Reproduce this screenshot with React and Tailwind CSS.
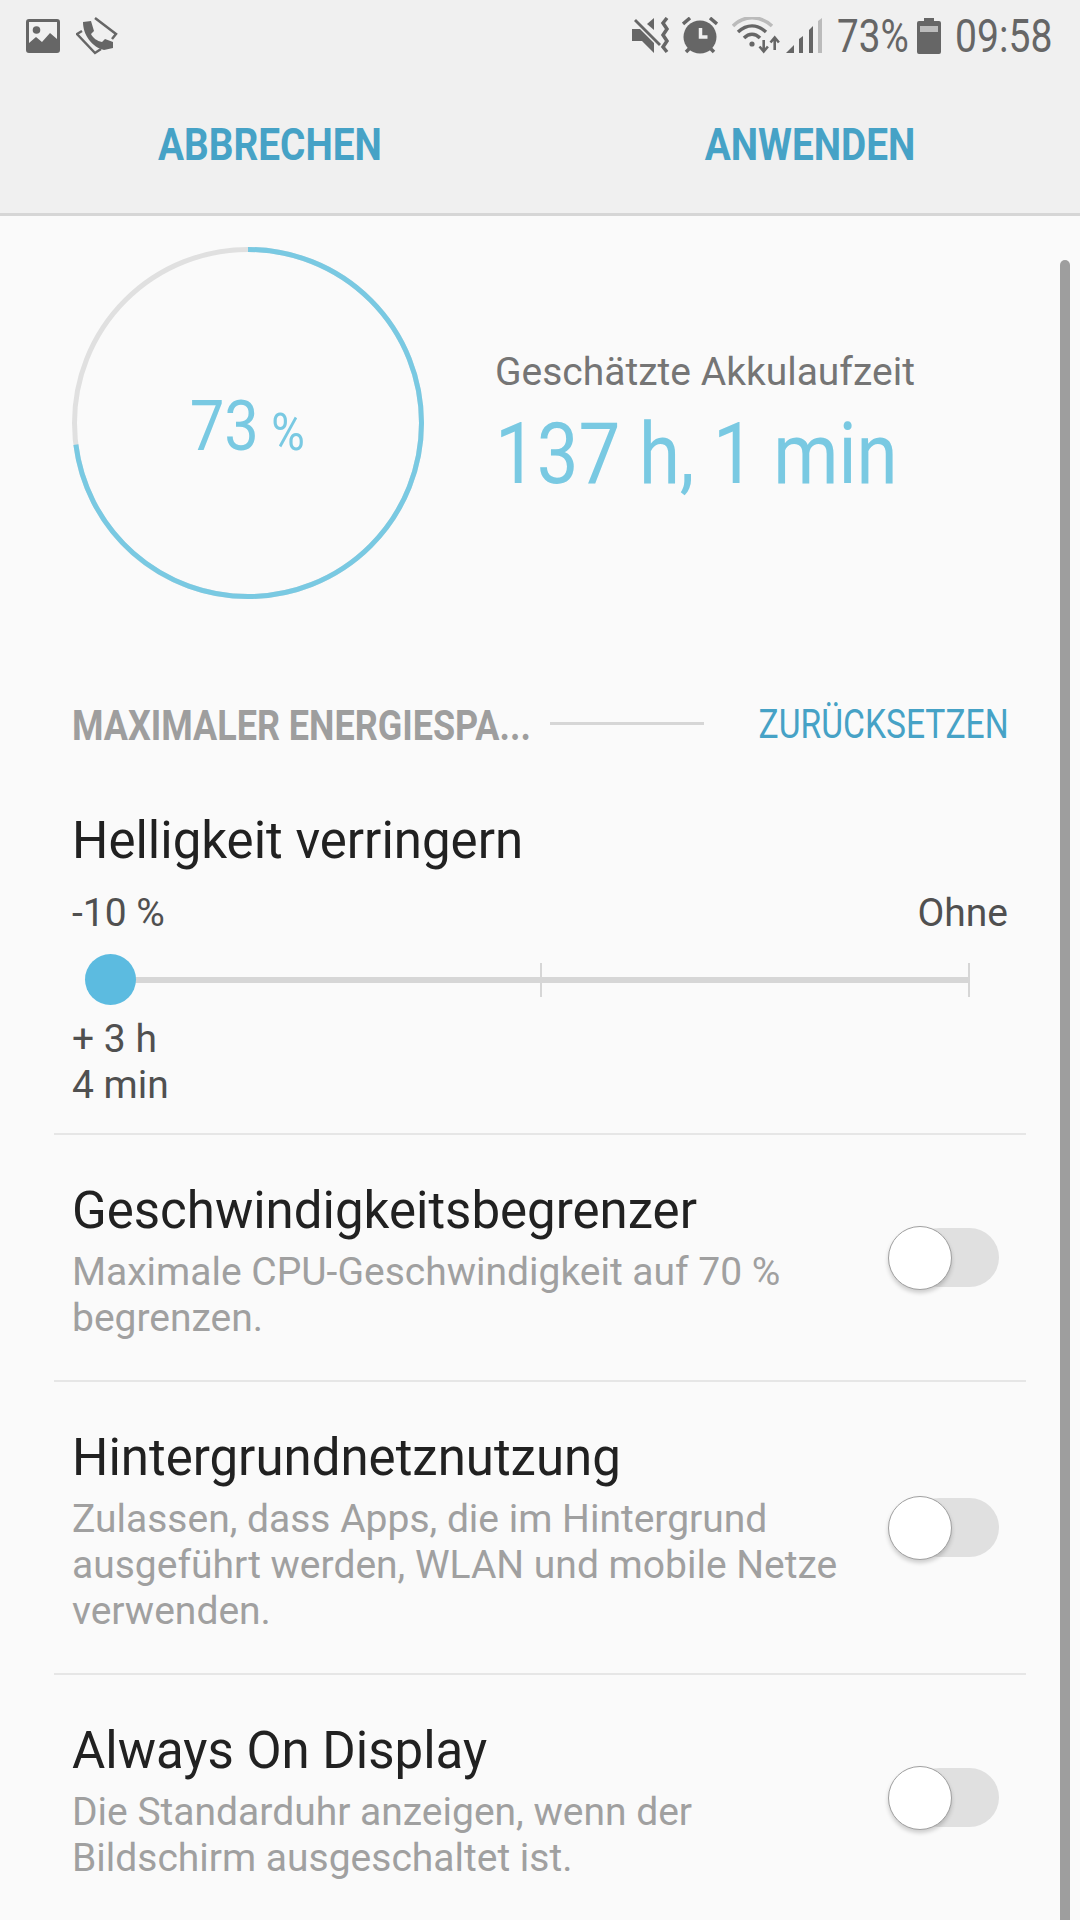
const font = { fontFamily: 'Roboto, sans-serif' };

const StatusIcons = () => (
  <div className="flex items-center">
    {/* mute */}
    <svg width="40" height="38" viewBox="0 0 40 38" fill="#666">
      <path d="M0 12h8l14 14v10L10 24H0z" />
      <path d="M15 7l7-6v12z" />
      <path d="M2 4l2-2 25 25-2 2z" />
      <path d="M35 1l-4 5 4 6-4 6 4 6-4 6 4 5" fill="none" stroke="#666" strokeWidth="3.5" />
    </svg>
    {/* alarm */}
    <svg width="36" height="38" viewBox="0 0 36 38" className="ml-[10px]">
      <circle cx="18" cy="20" r="16.5" fill="#666" />
      <path d="M1 7l7-6M35 7l-7-6M4 35l4-4M32 35l-4-4" stroke="#666" strokeWidth="3.5" fill="none" />
      <path d="M18.5 11v9h7" stroke="#f0f0f0" strokeWidth="3.5" fill="none" />
    </svg>
    {/* wifi */}
    <svg width="48" height="38" viewBox="0 0 48 38" fill="none" className="ml-[14px]">
      <path d="M1 9C12 -2 28 -2 40 9" stroke="#bbb" strokeWidth="3.5" />
      <path d="M6 15c9-8 19-8 28 0" stroke="#666" strokeWidth="3.5" />
      <path d="M12 21c5-5 11-5 16 0" stroke="#666" strokeWidth="3.5" />
      <circle cx="20" cy="27" r="2.6" fill="#666" />
      <path d="M31.7 23v10M27.5 29.5l4.2 5 4.2-5" stroke="#666" strokeWidth="2.6" />
      <path d="M42.7 33V21M38.5 25.5l4.2-5 4.2 5" stroke="#666" strokeWidth="2.6" />
    </svg>
    {/* signal */}
    <svg width="37" height="38" viewBox="0 0 37 38" className="ml-[6px]">
      <path d="M0 36l8-8v8z" fill="#666" />
      <path d="M13 22l4-3v17h-4z" fill="#666" />
      <path d="M23 13l4-4v27h-4z" fill="#666" />
      <path d="M32 4l4-3v35h-4z" fill="#bbb" />
    </svg>
  </div>
);

const Toggle = () => (
  <div className="relative w-[111px] h-[64px] shrink-0">
    <div className="absolute left-[22px] top-[2px] w-[89px] h-[59px] rounded-full bg-[#e0e0e0]" />
    <div className="absolute left-0 top-0 w-[64px] h-[64px] rounded-full bg-white border border-[#a0a0a0] shadow-[0_3px_4px_rgba(0,0,0,0.18)]" />
  </div>
);

const SettingRow = ({ title, desc, last }) => (
  <div className={`mx-[54px] pl-[18px] pr-[27px] flex items-center justify-between ${last ? '' : 'border-b-2 border-[#e6e6e6]'}`}>
    <div className="pt-[46px] pb-[39px]">
      <div className="text-[51px] leading-[60px] text-[#212121] whitespace-nowrap">{title}</div>
      <div className="text-[39px] leading-[46px] text-[#a0a0a0] whitespace-nowrap mt-[8px]">
        {desc.map((line) => (
          <div key={line}>{line}</div>
        ))}
      </div>
    </div>
    <Toggle />
  </div>
);

export default function App() {
  return (
    <div style={font} className="relative w-[1080px] h-[1920px] bg-[#fafafa] overflow-hidden">
      {/* status + action bar */}
      <div className="h-[216px] bg-[#f0f0f0] border-b-[3px] border-[#d6d6d6]">
        <div className="h-[72px] flex items-center justify-between pl-[26px] pr-[29px]">
          <div className="flex items-center gap-[16px]">
            <svg width="34" height="34" viewBox="0 0 34 34">
              <path fillRule="evenodd" d="M3 0h28a3 3 0 0 1 3 3v28a3 3 0 0 1-3 3H3a3 3 0 0 1-3-3V3a3 3 0 0 1 3-3zM3 3v21l7-6 6 5 8-9 7 6V3z" fill="#666" />
              <circle cx="10.5" cy="11" r="3.8" fill="#666" />
            </svg>
            <svg width="42" height="38" viewBox="0 0 42 38" fill="none">
              <path d="M19 1l21 16-4 5M6 14l-5 3 18 19 6-4" stroke="#666" strokeWidth="2.5" />
              <path d="M7 5l8-1 3 10-3 3c2 4 6 7 11 8l3-3 8 3v6l-9 2C16 30 7 18 7 5z" fill="#666" />
            </svg>
          </div>
          <div className="flex items-center">
            <StatusIcons />
            <div className="ml-[14px] w-[70px] text-[46px] leading-none text-[#666] origin-left scale-x-[0.84] whitespace-nowrap">73%</div>
            <svg width="24" height="36" viewBox="0 0 24 36" className="ml-[10px]">
              <path d="M7 0h10v3h5a2 2 0 0 1 2 2v29a2 2 0 0 1-2 2H2a2 2 0 0 1-2-2V5a2 2 0 0 1 2-2h5z" fill="#666" />
              <rect x="3" y="8" width="18" height="6" fill="#bbb" />
            </svg>
            <div className="ml-[14px] w-[96px] text-[46px] leading-none text-[#666] origin-left scale-x-[0.85] whitespace-nowrap">09:58</div>
          </div>
        </div>
        <div className="flex h-[141px] items-center text-[44px] font-bold text-[#46a2c6] pt-[5px]">
          <div className="w-[540px] text-center scale-x-[0.88]">ABBRECHEN</div>
          <div className="w-[540px] text-center scale-x-[0.88]">ANWENDEN</div>
        </div>
      </div>

      {/* battery summary */}
      <div className="flex items-center pl-[72px] pt-[31px]">
        <div className="relative w-[352px] h-[352px] shrink-0">
          <svg width="352" height="352" viewBox="0 0 352 352" className="-rotate-90">
            <circle cx="176" cy="176" r="173.5" fill="none" stroke="#e0e0e0" strokeWidth="5" />
            <circle cx="176" cy="176" r="173.5" fill="none" stroke="#79c9e2" strokeWidth="5" pathLength="100" strokeDasharray="73 27" />
          </svg>
          <div className="absolute inset-0 flex items-baseline justify-center pt-[144px] pr-[4px] text-[#79c9e2]">
            <span className="text-[70px] leading-none scale-x-[0.88]">73</span>
            <span className="text-[52px] leading-none ml-[6px] scale-x-[0.88]">%</span>
          </div>
        </div>
        <div className="ml-[71px] mt-[3px]">
          <div className="text-[39px] leading-[44px] text-[#757575] whitespace-nowrap">Geschätzte Akkulaufzeit</div>
          <div className="mt-[15px] text-[86px] leading-[90px] text-[#79c9e2] whitespace-nowrap origin-left scale-x-[0.865]">137 h, 1 min</div>
        </div>
      </div>

      {/* section header */}
      <div className="flex items-center pl-[72px] pr-[71px] mt-[101px] h-[50px]">
        <div className="w-[478px] text-[42px] font-bold text-[#9e9e9e] whitespace-nowrap origin-left scale-x-[0.856]">MAXIMALER ENERGIESPA...</div>
        <div className="w-[154px] h-[3px] bg-[#d6d6d6] -mt-[4px]" />
        <div className="ml-auto text-[40px] text-[#46a2c6] whitespace-nowrap origin-right scale-x-[0.84]">ZURÜCKSETZEN</div>
      </div>

      {/* brightness */}
      <div className="mx-[54px] mt-[61px] pl-[18px] pr-[18px] pb-[25px] border-b-2 border-[#e6e6e6]">
        <div className="text-[51px] leading-[60px] text-[#212121] whitespace-nowrap">Helligkeit verringern</div>
        <div className="flex justify-between mt-[19px] text-[39px] leading-[46px] text-[#505050]">
          <span>-10 %</span>
          <span>Ohne</span>
        </div>
        <div className="relative h-[51px] mt-[18px] ml-[13px] w-[885px]">
          <div className="absolute left-[25px] right-0 top-[23px] h-[6px] bg-[#d6d6d6]" />
          <div className="absolute left-[455px] top-[9px] w-[2px] h-[34px] bg-[#d6d6d6]" />
          <div className="absolute right-0 top-[9px] w-[2px] h-[34px] bg-[#d6d6d6]" />
          <div className="absolute left-0 top-0 w-[51px] h-[51px] rounded-full bg-[#5cbbe0]" />
        </div>
        <div className="mt-[11px] text-[39px] leading-[46px] text-[#505050]">
          <div>+ 3 h</div>
          <div>4 min</div>
        </div>
      </div>

      <SettingRow title="Geschwindigkeitsbegrenzer" desc={['Maximale CPU-Geschwindigkeit auf 70 %', 'begrenzen.']} />
      <SettingRow title="Hintergrundnetznutzung" desc={['Zulassen, dass Apps, die im Hintergrund', 'ausgeführt werden, WLAN und mobile Netze', 'verwenden.']} />
      <SettingRow title="Always On Display" desc={['Die Standarduhr anzeigen, wenn der', 'Bildschirm ausgeschaltet ist.']} last />

      {/* scrollbar */}
      <div className="absolute left-[1060px] top-[260px] w-[10px] h-[1660px] bg-[#9e9e9e] rounded-t-full" />
    </div>
  );
}
